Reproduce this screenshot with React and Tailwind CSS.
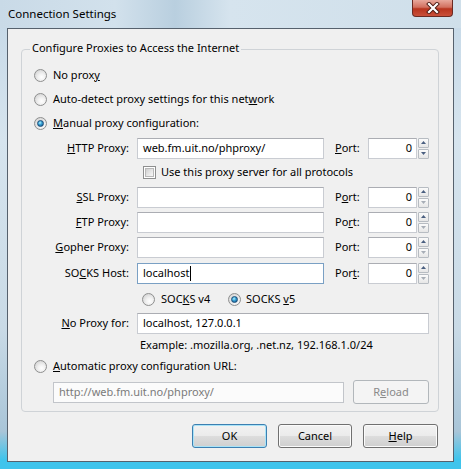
import React from "react";

const FONT = '"Noto Sans", "Open Sans", Arial, sans-serif';

const Radio = ({ checked }) => (
  <span className="relative flex items-center justify-center w-[13px] h-[13px] rounded-full border border-[#8e8f8f] bg-[radial-gradient(circle_at_60%_65%,#ffffff_0%,#f1f1f1_35%,#c9c9c9_100%)] shrink-0">
    {checked && (
      <span className="w-[7px] h-[7px] rounded-full bg-[radial-gradient(circle_at_40%_35%,#b8f4ff_0%,#3aa3d6_40%,#0e4a80_100%)] border border-[#1b4d78]" />
    )}
  </span>
);

const Check = () => (
  <span className="flex items-center justify-center w-[13px] h-[13px] border border-[#8e8f8f] bg-white shrink-0">
    <span className="w-[9px] h-[9px] border border-[#b8b8b8] bg-[linear-gradient(135deg,#cfcfcf_0%,#e9e9e9_60%,#f8f8f8_100%)]" />
  </span>
);

const Input = ({ className = "", value = "", caret = false, focused = false }) => (
  <div
    className={
      "h-[21px] bg-white border flex items-center pl-[5px] text-black shrink-0 " +
      (focused ? "border-[#7aa0c4] " : "border-[#c9ccd2] border-t-[#abadb3] ") +
      className
    }
  >
    <span className="leading-[16px]">{value}</span>
    {caret && <span className="w-[1px] h-[15px] bg-black ml-[1px]" />}
  </div>
);

const Arrow = ({ up, dim }) => (
  <div className="flex-1 border border-[#b7bcc2] rounded-[1px] bg-[linear-gradient(to_bottom,#fbfbfb,#e6e6e6)] flex items-center justify-center">
    <svg width="5" height="3" viewBox="0 0 5 3">
      {up ? (
        <path d="M0 3 L2.5 0 L5 3 Z" fill={dim ? "#a7adb6" : "#4a5f80"} />
      ) : (
        <path d="M0 0 L2.5 3 L5 0 Z" fill={dim ? "#a7adb6" : "#4a5f80"} />
      )}
    </svg>
  </div>
);

const Port = ({ dimDown = true }) => (
  <div className="flex items-center">
    <div className="h-[21px] w-[49px] bg-white border border-[#c9ccd2] border-t-[#abadb3] flex items-center justify-end pr-[4px]">
      <span className="leading-[16px]">0</span>
    </div>
    <div className="flex flex-col w-[11px] h-[21px] gap-[1px] ml-[1px]">
      <Arrow up />
      <Arrow dim={dimDown} />
    </div>
  </div>
);

const Btn = ({ children, className = "", def = false, disabled = false }) => (
  <div
    className={
      "h-[24px] rounded-[3px] border flex items-center justify-center shrink-0 " +
      (disabled
        ? "border-[#b2b7bb] bg-[#f4f4f4] text-[#8a8a8a] "
        : def
        ? "border-[#3c7fb1] bg-[linear-gradient(to_bottom,#f2f2f2_0%,#ebebeb_50%,#dddddd_50%,#cfcfcf_100%)] shadow-[inset_0_0_0_1px_#a9e3f7] text-black "
        : "border-[#707070] bg-[linear-gradient(to_bottom,#f2f2f2_0%,#ebebeb_50%,#dddddd_50%,#cfcfcf_100%)] shadow-[inset_0_0_0_1px_#fbfbfb] text-black ") +
      className
    }
  >
    {children}
  </div>
);

const Label = ({ children }) => (
  <span className="w-[107px] text-right shrink-0 leading-[16px]">{children}</span>
);

const PortLabel = ({ children }) => (
  <span className="ml-[11px] w-[33px] shrink-0 leading-[16px]">{children}</span>
);

export default function App() {
  return (
    <div
      className="w-[461px] h-[469px] flex flex-col overflow-hidden text-[11px] text-black bg-[linear-gradient(to_bottom,#c5d8e7_0%,#d6e4ee_30%,#c9dae6_70%,#a9c5d8_92%,#3fc4ec_98%)]"
      style={{ fontFamily: FONT }}
    >
      {/* title bar */}
      <div className="h-[28px] shrink-0 flex items-start bg-[linear-gradient(to_right,#c9dae7_0%,#d2e1ec_25%,#b9cfdf_38%,#d6e4ee_50%,#cfdfea_100%)]">
        <span className="ml-[8px] mt-[6px] leading-[16px] text-[11.5px]">Connection Settings</span>
        <div className="ml-auto mr-[8px] w-[41px] h-[17px] rounded-b-[4px] border border-t-0 border-[#6b2a22] bg-[linear-gradient(to_bottom,#e8a89c_0%,#d2705f_45%,#b8341e_55%,#c9503a_100%)] flex items-center justify-center">
          <svg width="14" height="12" viewBox="0 0 14 12">
            <path d="M3 2 L11 10 M11 2 L3 10" stroke="#4d1a12" strokeWidth="4" strokeLinecap="square" />
            <path d="M3 2 L11 10 M11 2 L3 10" stroke="#ffffff" strokeWidth="2.2" strokeLinecap="square" />
          </svg>
        </div>
      </div>

      {/* content */}
      <div className="mx-[7px] h-[434px] shrink-0 border border-[#56616d] bg-[#f0f0f0] flex flex-col">
        <div className="relative mt-[20px] ml-[13px] w-[418px] h-[363px] border border-[#cfd3d7] rounded-[4px] pt-[13px] flex flex-col">
          <span className="absolute left-[8px] top-[-10px] px-[2px] bg-[#f0f0f0] leading-[16px]">
            Configure Proxies to Access the Internet
          </span>

          <div className="h-[24px] flex items-center pl-[12px] gap-[6px]">
            <Radio />
            <span>
              No prox<u>y</u>
            </span>
          </div>
          <div className="h-[24px] flex items-center pl-[12px] gap-[6px]">
            <Radio />
            <span>
              Auto-detect proxy settings for this net<u>w</u>ork
            </span>
          </div>
          <div className="h-[24px] flex items-center pl-[12px] gap-[6px]">
            <Radio checked />
            <span>
              <u>M</u>anual proxy configuration:
            </span>
          </div>

          <div className="h-[26px] flex items-center">
            <Label>
              <u>H</u>TTP Proxy:
            </Label>
            <Input className="ml-[8px] w-[187px]" value="web.fm.uit.no/phproxy/" />
            <PortLabel>
              <u>P</u>ort:
            </PortLabel>
            <Port dimDown={false} />
          </div>

          <div className="h-[23px] flex items-center pl-[121px] gap-[5px]">
            <Check />
            <span>Use this proxy server for all protocols</span>
          </div>

          <div className="h-[26px] flex items-center">
            <Label>
              <u>S</u>SL Proxy:
            </Label>
            <Input className="ml-[8px] w-[187px]" />
            <PortLabel>
              P<u>o</u>rt:
            </PortLabel>
            <Port />
          </div>
          <div className="h-[24px] flex items-center">
            <Label>
              <u>F</u>TP Proxy:
            </Label>
            <Input className="ml-[8px] w-[187px]" />
            <PortLabel>
              Po<u>r</u>t:
            </PortLabel>
            <Port />
          </div>
          <div className="h-[26px] flex items-center">
            <Label>
              <u>G</u>opher Proxy:
            </Label>
            <Input className="ml-[8px] w-[187px]" />
            <PortLabel>Port:</PortLabel>
            <Port />
          </div>
          <div className="h-[26px] flex items-center">
            <Label>
              SO<u>C</u>KS Host:
            </Label>
            <Input className="ml-[8px] w-[187px]" value="localhost" caret focused />
            <PortLabel>
              Por<u>t</u>:
            </PortLabel>
            <Port />
          </div>

          <div className="h-[26px] flex items-center pl-[120px]">
            <Radio />
            <span className="ml-[6px] w-[67px]">
              SOC<u>K</u>S v4
            </span>
            <Radio checked />
            <span className="ml-[5px]">
              SOCKS <u>v</u>5
            </span>
          </div>

          <div className="h-[22px] flex items-center">
            <Label>
              <u>N</u>o Proxy for:
            </Label>
            <Input className="ml-[8px] w-[292px]" value="localhost, 127.0.0.1" />
          </div>

          <div className="h-[23px] flex items-center pl-[118px]">
            <span>Example: .mozilla.org, .net.nz, 192.168.1.0/24</span>
          </div>

          <div className="h-[19px] flex items-center pl-[12px] gap-[6px]">
            <Radio />
            <span>
              <u>A</u>utomatic proxy configuration URL:
            </span>
          </div>

          <div className="h-[32px] flex items-center pl-[31px]">
            <div className="h-[21px] w-[291px] bg-[#fbfbfb] border border-[#c2c5ca] flex items-center pl-[5px] text-[#7a7a7a]">
              <span className="leading-[16px]">http://web.fm.uit.no/phproxy/</span>
            </div>
            <Btn className="ml-[9px] w-[76px] h-[22px]" disabled>
              R<u>e</u>load
            </Btn>
          </div>
        </div>

        <div className="mt-[12px] mr-[15px] flex justify-end gap-[11px]">
          <Btn className="w-[75px]" def>
            OK
          </Btn>
          <Btn className="w-[74px]">Cancel</Btn>
          <Btn className="w-[75px]">
            <u>H</u>elp
          </Btn>
        </div>
      </div>
    </div>
  );
}
